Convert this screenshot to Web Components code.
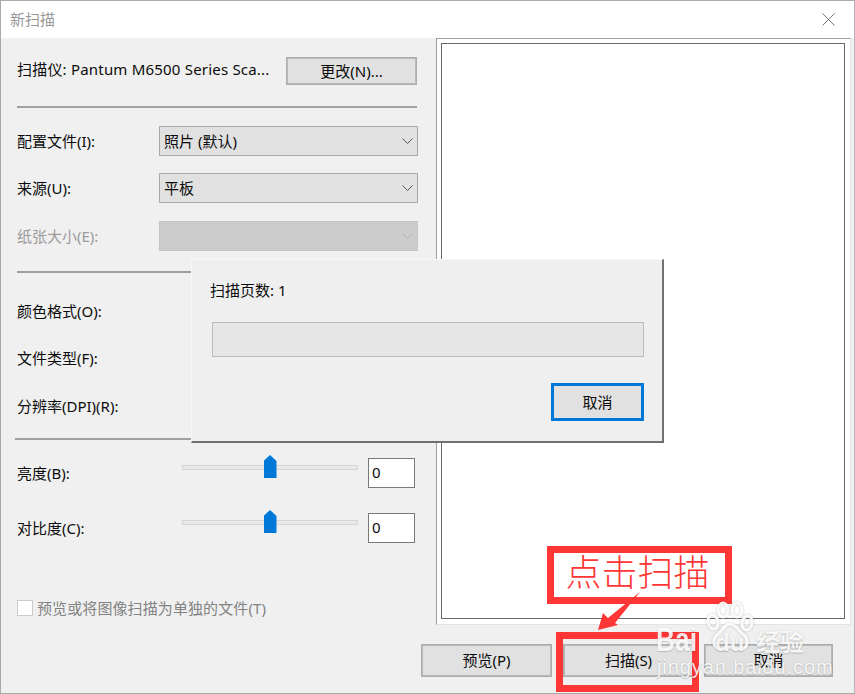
<!DOCTYPE html>
<html lang="zh">
<head>
<meta charset="utf-8">
<title>新扫描</title>
<style>
  html, body { margin: 0; padding: 0; background: #f0f0f0; }
  body { font: 15px "Noto Sans", "Noto Sans CJK SC", sans-serif; color: #0c0c0c; }
</style>
</head>
<body>

<scan-window>
  <form-row slot="form" kind="scanner" label="扫描仪: Pantum M6500 Series Sca..."><win-button style="width:131px">更改(N)...</win-button></form-row>
  <form-rule slot="form" gap="21"></form-rule>
  <form-row slot="form" top="18" label="配置文件(I):"><win-combo>照片 (默认)</win-combo></form-row>
  <form-row slot="form" top="17" label="来源(U):"><win-combo>平板</win-combo></form-row>
  <form-row slot="form" top="18" label="纸张大小(E):" disabled><win-combo disabled></win-combo></form-row>
  <form-rule slot="form" gap="20"></form-rule>
  <form-row slot="form" top="23" label="颜色格式(O):"></form-row>
  <form-row slot="form" top="17" label="文件类型(F):"></form-row>
  <form-row slot="form" top="18" label="分辨率(DPI)(R):"></form-row>
  <form-rule slot="form" gap="17" wide></form-rule>
  <form-row slot="form" top="18" label="亮度(B):"><win-slider value="0"></win-slider></form-row>
  <form-row slot="form" top="25" label="对比度(C):"><win-slider value="0"></win-slider></form-row>
  <win-check slot="form">预览或将图像扫描为单独的文件(T)</win-check>

  <win-button slot="actions" style="width:131px;height:33px">预览(P)</win-button>
  <win-button slot="actions" style="width:131px;height:33px;margin-left:11px">扫描(S)</win-button>
  <win-button slot="actions" style="width:129px;height:33px;margin-left:10px">取消</win-button>
</scan-window>

<progress-dialog label="扫描页数: 1" action="取消"></progress-dialog>
<scan-callout text="点击扫描"></scan-callout>
<baidu-mark></baidu-mark>

<script>
const windowTemplate = document.createElement("template");
windowTemplate.innerHTML = `
  <style>
    :host {
      display: flex;
      flex-direction: column;
      box-sizing: border-box;
      width: 855px;
      height: 694px;
      background: #f0f0f0;
      border: 1px solid #a9a9a9;
      border-right-color: #b5b5b5;
    }
    .title {
      flex: none;
      display: flex;
      align-items: center;
      justify-content: space-between;
      height: 37px;
      padding: 0 19px 0 9px;
      background: #fff;
      color: #999;
    }
    .title span { padding-bottom: 2px; }
    .main {
      flex: none;
      display: grid;
      grid-template-columns: 435px 1fr;
      height: 587px;
    }
    .form {
      display: flex;
      flex-direction: column;
      padding: 19px 19px 0 16px;
      min-width: 0;
    }
    .pane {
      box-sizing: border-box;
      width: 415px;
      height: 587px;
      padding: 4px 5px 5px 4px;
      background: #fff;
      border: 1px solid #a0a0a0;
      border-right-color: #e3e3e3;
      border-bottom-color: #e3e3e3;
    }
    .paper {
      box-sizing: border-box;
      height: 100%;
      background: #fff;
      border: 1px solid #696969;
    }
    .actions {
      flex: 1;
      display: flex;
      justify-content: flex-end;
      align-items: flex-start;
      padding: 19px 21px 0 0;
    }
  </style>
  <div class="title">
    <span>新扫描</span>
    <svg width="13" height="13" viewBox="0 0 13 13"><path d="M.5.5l12 12M12.500.5l-12 12" stroke="#777" fill="none"/></svg>
  </div>
  <div class="main">
    <div class="form"><slot name="form"></slot></div>
    <div class="pane"><div class="paper"></div></div>
  </div>
  <div class="actions"><slot name="actions"></slot></div>
`;
class ScanWindow extends HTMLElement {
  constructor() {
    super();
    this.attachShadow({ mode: "open" }).appendChild(windowTemplate.content.cloneNode(true));
  }
}
customElements.define("scan-window", ScanWindow);

const rowTemplate = document.createElement("template");
rowTemplate.innerHTML = `
  <style>
    :host {
      display: flex;
      align-items: center;
      justify-content: space-between;
      height: 30px;
      flex: none;
    }
    :host([kind="scanner"]) { height: 28px; }
    :host([kind="scanner"]) .label { padding-bottom: 5px; letter-spacing: .2px; }
    :host([disabled]) .label { color: #9b9b9b; }
    .label { white-space: nowrap; padding-bottom: 2px; }
    ::slotted(win-slider) { margin-right: 2px; }
  </style>
  <span class="label"></span>
  <slot></slot>
`;
class FormRow extends HTMLElement {
  constructor() {
    super();
    this.attachShadow({ mode: "open" }).appendChild(rowTemplate.content.cloneNode(true));
  }
  connectedCallback() {
    this.shadowRoot.querySelector(".label").textContent = this.getAttribute("label");
    this.style.marginTop = (this.getAttribute("top") || 0) + "px";
  }
}
customElements.define("form-row", FormRow);

const ruleTemplate = document.createElement("template");
ruleTemplate.innerHTML = `
  <style>
    :host {
      display: block;
      flex: none;
      height: 2px;
      background: #a0a0a0;
    }
    :host([wide]) { margin-left: -2px; }
  </style>
`;
class FormRule extends HTMLElement {
  constructor() {
    super();
    this.attachShadow({ mode: "open" }).appendChild(ruleTemplate.content.cloneNode(true));
  }
  connectedCallback() {
    this.style.marginTop = this.getAttribute("gap") + "px";
  }
}
customElements.define("form-rule", FormRule);

const buttonTemplate = document.createElement("template");
buttonTemplate.innerHTML = `
  <style>
    :host {
      display: flex;
      align-items: center;
      justify-content: center;
      box-sizing: border-box;
      height: 28px;
      padding-bottom: 2px;
      background: #e1e1e1;
      border: 1px solid #adadad;
      outline: 1px solid #b9b9b9;
      outline-offset: -2px;
      color: #0c0c0c;
    }
  </style>
  <slot></slot>
`;
class WinButton extends HTMLElement {
  constructor() {
    super();
    this.attachShadow({ mode: "open" }).appendChild(buttonTemplate.content.cloneNode(true));
  }
}
customElements.define("win-button", WinButton);

const comboTemplate = document.createElement("template");
comboTemplate.innerHTML = `
  <style>
    :host {
      display: flex;
      align-items: center;
      justify-content: space-between;
      box-sizing: border-box;
      width: 259px;
      height: 30px;
      padding: 0 4px 0 4px;
      background: #e1e1e1;
      border: 1px solid #a9a9a9;
      margin-right: -1px;
    }
    :host([disabled]) {
      background: #cccccc;
      border-color: #c4c4c4;
    }
    :host([disabled]) path { stroke: #b4b4b4; }
    span { padding-bottom: 2px; }
    svg { flex: none; }
  </style>
  <span><slot></slot></span>
  <svg width="11" height="6" viewBox="0 0 11 6"><path d="M.5.500l5 5 5-5" fill="none" stroke="#555"/></svg>
`;
class WinCombo extends HTMLElement {
  constructor() {
    super();
    this.attachShadow({ mode: "open" }).appendChild(comboTemplate.content.cloneNode(true));
  }
}
customElements.define("win-combo", WinCombo);

const sliderTemplate = document.createElement("template");
sliderTemplate.innerHTML = `
  <style>
    :host {
      display: flex;
      align-items: center;
      gap: 10px;
    }
    .track {
      display: flex;
      justify-content: center;
      box-sizing: border-box;
      width: 176px;
      height: 5px;
      background: #e7eaea;
      border: 1px solid #d6d6d6;
      margin-top: -11px;
    }
    .thumb {
      flex: none;
      width: 13px;
      height: 23px;
      margin-top: -11px;
      background: #0078d7;
      clip-path: polygon(50% 0, 100% 26%, 100% 100%, 0 100%, 0 26%);
    }
    .value {
      box-sizing: border-box;
      width: 47px;
      height: 30px;
      padding: 0 0 3px 3px;
      display: flex;
      align-items: center;
      background: #fff;
      border: 1px solid #7a7a7a;
    }
  </style>
  <div class="track"><div class="thumb"></div></div>
  <div class="value"></div>
`;
class WinSlider extends HTMLElement {
  constructor() {
    super();
    this.attachShadow({ mode: "open" }).appendChild(sliderTemplate.content.cloneNode(true));
  }
  connectedCallback() {
    this.shadowRoot.querySelector(".value").textContent = this.getAttribute("value");
  }
}
customElements.define("win-slider", WinSlider);

const checkTemplate = document.createElement("template");
checkTemplate.innerHTML = `
  <style>
    :host {
      display: flex;
      align-items: center;
      gap: 4px;
      flex: none;
      height: 16px;
      margin-top: 57px;
      color: #838383;
    }
    .box {
      box-sizing: border-box;
      width: 16px;
      height: 16px;
      background: #fff;
      border: 1px solid #cccccc;
    }
    span { padding-bottom: 2px; letter-spacing: .1px; }
  </style>
  <div class="box"></div>
  <span><slot></slot></span>
`;
class WinCheck extends HTMLElement {
  constructor() {
    super();
    this.attachShadow({ mode: "open" }).appendChild(checkTemplate.content.cloneNode(true));
  }
}
customElements.define("win-check", WinCheck);

const dialogTemplate = document.createElement("template");
dialogTemplate.innerHTML = `
  <style>
    :host {
      position: absolute;
      left: 191px;
      top: 259px;
      box-sizing: border-box;
      width: 473px;
      height: 184px;
      display: flex;
      flex-direction: column;
      padding: 20px 18px 0 18px;
      background: #efefef;
      border: 1px solid #f7f7f7;
      border-right: 2px solid #707070;
      border-bottom: 2px solid #707070;
    }
    .label { height: 21px; line-height: 21px; }
    .bar {
      box-sizing: border-box;
      height: 35px;
      margin: 21px 0 0 2px;
      background: #e6e6e6;
      border: 1px solid #bcbcbc;
    }
    .foot { display: flex; justify-content: flex-end; margin-top: 26px; }
    button {
      box-sizing: border-box;
      width: 93px;
      height: 38px;
      padding: 0 0 2px;
      font: inherit;
      color: #0c0c0c;
      background: #e1e1e1;
      border: 3px solid #0078d7;
    }
  </style>
  <div class="label"></div>
  <div class="bar"></div>
  <div class="foot"><button></button></div>
`;
class ProgressDialog extends HTMLElement {
  constructor() {
    super();
    this.attachShadow({ mode: "open" }).appendChild(dialogTemplate.content.cloneNode(true));
  }
  connectedCallback() {
    this.shadowRoot.querySelector(".label").textContent = this.getAttribute("label");
    this.shadowRoot.querySelector("button").textContent = this.getAttribute("action");
  }
}
customElements.define("progress-dialog", ProgressDialog);

const markTemplate = document.createElement("template");
markTemplate.innerHTML = `
  <style>
    :host {
      position: absolute;
      left: 655px;
      top: 600px;
      width: 155px;
      height: 79px;
      color: rgba(255, 255, 255, .88);
      font-family: "Liberation Sans", "Noto Sans CJK SC", sans-serif;
      text-shadow: 0 1px 1px rgba(0, 0, 0, .14), 0 0 2px rgba(0, 0, 0, .14);
      pointer-events: none;
    }
    .logo {
      position: absolute;
      left: 1px;
      top: 24px;
      display: flex;
      align-items: baseline;
      line-height: 31px;
      font-weight: 700;
    }
    .bai {
      display: inline-block;
      font-size: 33px;
      width: 59px;
      transform: scaleX(.8);
      transform-origin: left center;
    }
    .du { font-size: 24px; width: 41px; }
    .jy { font-size: 24px; }
    .url {
      position: absolute;
      left: 2px;
      top: 55px;
      font-size: 20px;
      line-height: 24px;
      letter-spacing: .9px;
      white-space: nowrap;
    }
    svg {
      position: absolute;
      left: 50px;
      top: 0;
      filter: drop-shadow(0 0 1px rgba(0, 0, 0, .25));
    }
  </style>
  <svg width="52" height="52" viewBox="0 0 52 52" fill="none" stroke="rgba(255,255,255,.9)" stroke-width="3">
    <ellipse cx="8" cy="22" rx="5" ry="7" transform="rotate(-12 8 22)"/>
    <ellipse cx="18" cy="10" rx="5" ry="7"/>
    <ellipse cx="32" cy="10" rx="5" ry="7"/>
    <ellipse cx="42" cy="23" rx="5" ry="7" transform="rotate(12 42 23)"/>
    <path d="M25 24c-6 0-8 8-13 11-5 4-4 13 3 14 4 0 6-2 10-2s7 2 11 2c7-1 8-9 3-14-5-3-8-11-14-11z"/>
  </svg>
  <div class="logo"><span class="bai">Bai</span><span class="du">du</span><span class="jy">经验</span></div>
  <div class="url">jingyan.baidu.com</div>
`;
class BaiduMark extends HTMLElement {
  constructor() {
    super();
    this.attachShadow({ mode: "open" }).appendChild(markTemplate.content.cloneNode(true));
  }
}
customElements.define("baidu-mark", BaiduMark);

const calloutTemplate = document.createElement("template");
calloutTemplate.innerHTML = `
  <style>
    :host {
      position: absolute;
      left: 0;
      top: 0;
      width: 855px;
      height: 694px;
      pointer-events: none;
    }
    .note, .target {
      position: absolute;
      box-sizing: border-box;
      border: 7px solid #ff3636;
    }
    .note {
      left: 547px;
      top: 546px;
      width: 185px;
      height: 58px;
      display: flex;
      align-items: center;
      justify-content: center;
      padding: 0 4px 4px 0;
      font-size: 36px;
      font-weight: 300;
      line-height: 40px;
      color: #ff3636;
    }
    .target { left: 556px; top: 632px; width: 143px; height: 60px; }
    svg { position: absolute; left: 0; top: 0; }
  </style>
  <div class="note"></div>
  <div class="target"></div>
  <svg width="855" height="694"><polygon points="598,630 603,613 608,618 640,592 615,623 618,625" fill="#ff3636"/></svg>
`;
class ScanCallout extends HTMLElement {
  constructor() {
    super();
    this.attachShadow({ mode: "open" }).appendChild(calloutTemplate.content.cloneNode(true));
  }
  connectedCallback() {
    this.shadowRoot.querySelector(".note").textContent = this.getAttribute("text");
  }
}
customElements.define("scan-callout", ScanCallout);
</script>
</body>
</html>
